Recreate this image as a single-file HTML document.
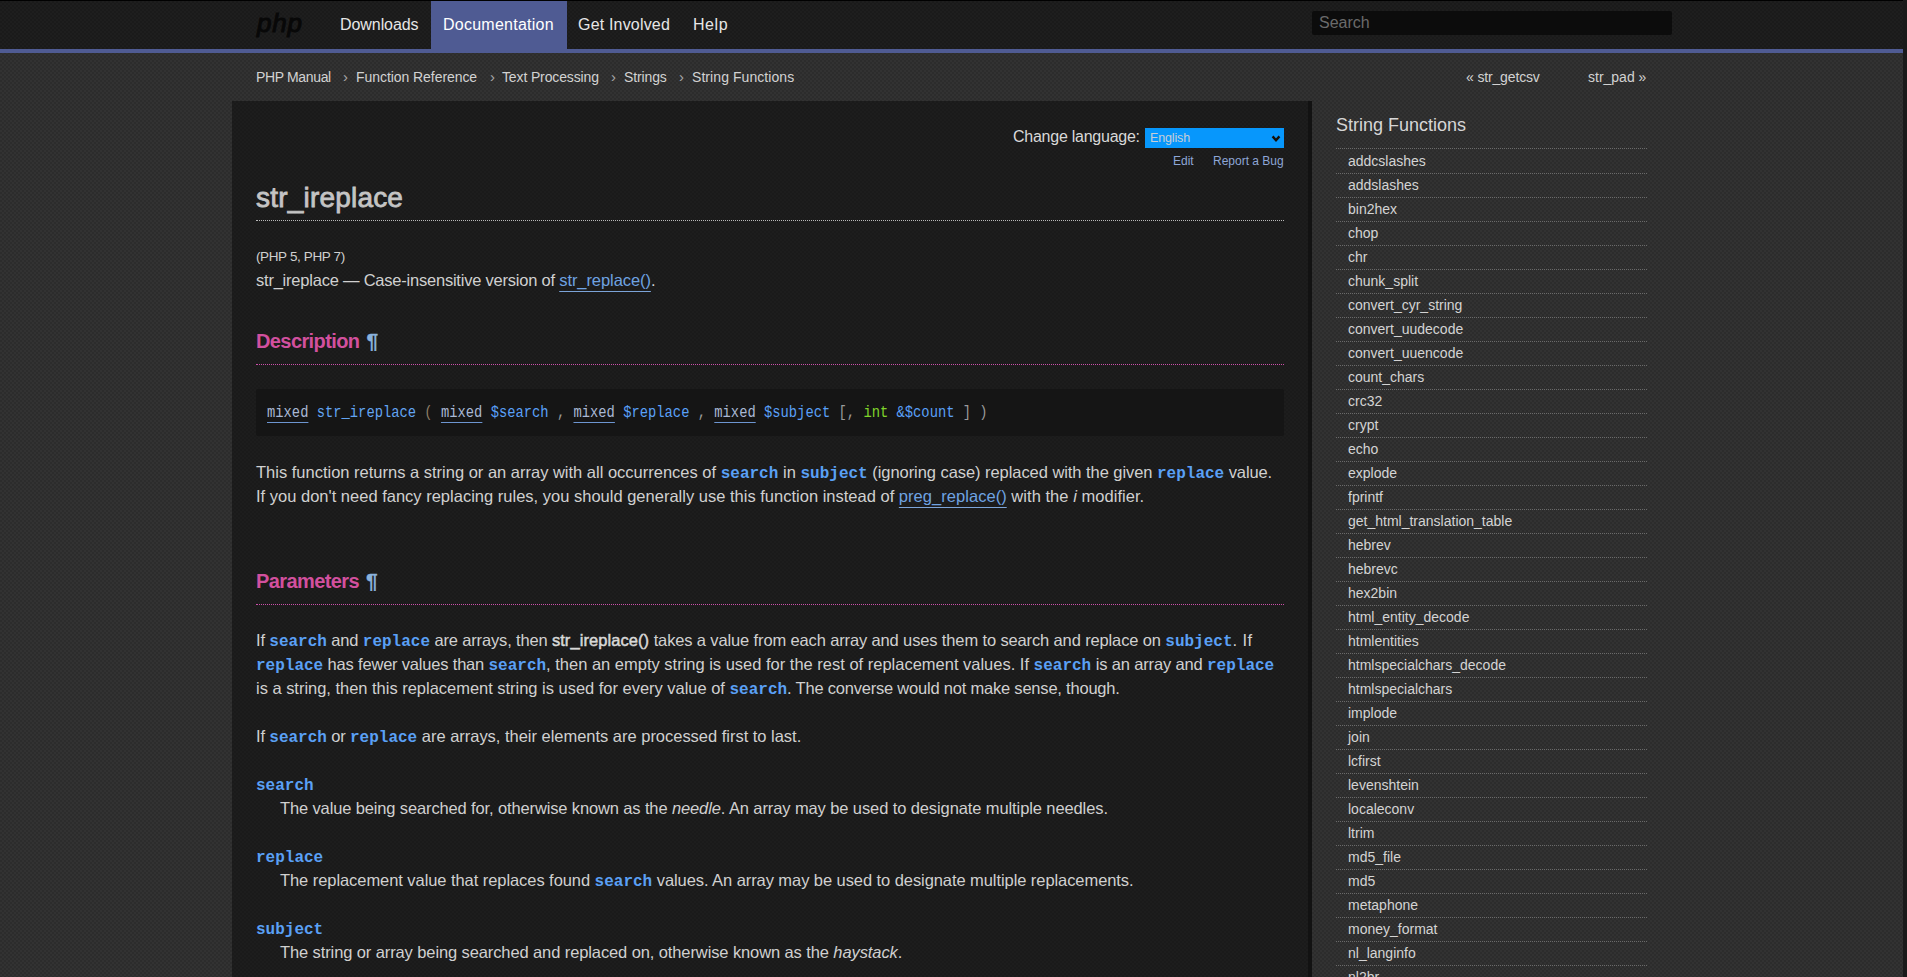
<!DOCTYPE html>
<html><head><meta charset="utf-8">
<style>
*{margin:0;padding:0;box-sizing:border-box}
html,body{width:1907px;height:977px;overflow:hidden}
body{font-family:"Liberation Sans",sans-serif;background:repeating-conic-gradient(#323232 0 25%,#2c2c2c 0 50%) 0 0/4px 4px;color:#cfcfcf;position:relative}
.abs{position:absolute;white-space:nowrap}
#topline{left:0;top:0;width:1907px;height:1px;background:#000}
#nav{left:0;top:1px;width:1903px;height:48px;background:repeating-conic-gradient(#1e1e1e 0 25%,#1a1a1a 0 50%) 0 0/4px 4px}
#navline{left:0;top:49px;width:1903px;height:4px;background:#4f5b93}
#scroll{left:1903px;top:0;width:4px;height:977px;background:#1a1a1a}
#logo{left:257px;top:8px;font:italic 26px/30px "Liberation Sans",sans-serif;color:#080808;-webkit-text-stroke:1px #080808;letter-spacing:0.8px}
.nav{top:1px;height:48px;line-height:48px;font-size:16px;color:#e6e6e6}
#docbox{left:431px;top:1px;width:136px;height:48px;background:#4f5b93}
#search{left:1312px;top:11px;width:360px;height:24px;background:#0c0c0c;border-radius:2px;color:#6a6a6a;font-size:16px;line-height:24px;padding-left:7px}
.bc{top:67px;font-size:14px;line-height:20px;color:#d2d2d2}
.sep{top:67px;font-size:15px;line-height:20px;color:#a8a8a8}
#content{left:232px;top:101px;width:1076px;height:876px;background:repeating-conic-gradient(#1d1d1d 0 25%,#1a1a1a 0 50%) 0 0/4px 4px}
#cborder{left:1308px;top:101px;width:4px;height:876px;background:#121212}
.p{font-size:16.5px;line-height:24px;left:256px;color:#d0d0d0}
.c{font-family:"Liberation Mono",monospace;font-weight:bold;color:#5aa0f5;font-size:16px}
a{color:#6fa3e2;text-decoration:underline;text-decoration-color:#7ca4d8;text-underline-offset:5px;text-decoration-thickness:1px}
.h2{left:256px;font-size:20px;line-height:24px;font-weight:bold;color:#d2509e;letter-spacing:-0.6px}
.pil{color:#8ab2dc;letter-spacing:0;font-size:21px;margin-left:2px;-webkit-text-stroke:0.3px #8ab2dc}
.dots{height:1px;border-top:1px dotted #b8b8b8}
.mdots{height:1px;border-top:1px dotted #cc4ea8}
#syn{left:256px;top:389px;width:1028px;height:47px;background:#151515;border-radius:2px}
#syntxt{left:267px;top:403px;font-family:"Liberation Mono",monospace;font-size:16.5px;line-height:20px;color:#9a9a9a;transform:scaleX(0.8364);transform-origin:0 0}
.ty{color:#a9b8d4;text-decoration:underline;text-decoration-color:#6d95d0;text-underline-offset:5px;text-decoration-thickness:1px}
.fn{color:#62a4f2}
.var{color:#5aa0f8}
.grn{color:#80d42a}
.pun{color:#8a7d66}
.side{left:1347px;font-size:14px;line-height:20px;color:#d4d4d4}
.sline{left:1336px;width:311px;height:1px;border-top:1px dotted #6a6a6a}

.p b{font-weight:normal;-webkit-text-stroke:0.5px #d8d8d8;color:#d8d8d8}

</style></head><body>
<div class="abs" id="topline"></div>
<div class="abs" id="nav"></div>
<div class="abs" id="navline"></div>
<div class="abs" id="scroll"></div>
<div class="abs" id="logo">php</div>
<div class="abs" id="docbox"></div>
<div class="abs nav" style="left:340px;letter-spacing:-0.07px">Downloads</div>
<div class="abs nav" style="left:443px;color:#fff;letter-spacing:0.25px">Documentation</div>
<div class="abs nav" style="left:578px;letter-spacing:0.18px">Get Involved</div>
<div class="abs nav" style="left:693px;letter-spacing:0.55px">Help</div>
<div class="abs" id="search">Search</div>

<div class="abs bc" style="left:256px;letter-spacing:-0.35px">PHP Manual</div>
<div class="abs sep" style="left:343px">›</div>
<div class="abs bc" style="left:356px;letter-spacing:-0.06px">Function Reference</div>
<div class="abs sep" style="left:490px">›</div>
<div class="abs bc" style="left:502px;letter-spacing:-0.13px">Text Processing</div>
<div class="abs sep" style="left:611px">›</div>
<div class="abs bc" style="left:624px;letter-spacing:-0.13px">Strings</div>
<div class="abs sep" style="left:679px">›</div>
<div class="abs bc" style="left:692px;letter-spacing:0.07px">String Functions</div>
<div class="abs bc" style="left:1466px;letter-spacing:-0.15px">« str_getcsv</div>
<div class="abs bc" style="left:1588px">str_pad »</div>

<div class="abs" id="content"></div>
<div class="abs" id="cborder"></div>

<div class="abs" style="left:1013px;top:127px;font-size:16px;line-height:20px;color:#d8d8d8;letter-spacing:-0.25px">Change language:</div>
<div class="abs" style="left:1145px;top:128px;width:139px;height:20px;background:#0797fc;color:#c8ced6;font-size:12.5px;letter-spacing:-0.15px;line-height:20px;padding-left:5px">English<svg style="position:absolute;left:126px;top:7px" width="10" height="8" viewBox="0 0 10 8"><path d="M1.6 1.4 L5 5.2 L8.4 1.4" stroke="#161008" stroke-width="2.4" fill="none"/></svg></div>
<div class="abs" style="left:1173px;top:153px;font-size:12px;line-height:16px;color:#8ea6d6">Edit</div>
<div class="abs" style="left:1213px;top:153px;font-size:12px;line-height:16px;color:#8ea6d6">Report a Bug</div>

<div class="abs" style="left:256px;top:182px;font-size:28px;line-height:32px;color:#c4c4c4;-webkit-text-stroke:0.8px #c4c4c4;letter-spacing:0.2px">str_ireplace</div>
<div class="abs dots" style="left:256px;top:220px;width:1028px"></div>


<div class="abs h2" style="top:329px">Description <span class="pil">¶</span></div>
<div class="abs mdots" style="left:256px;top:364px;width:1028px"></div>

<div class="abs" id="syn"></div>
<div class="abs" id="syntxt"><span class="ty">mixed</span> <span class="fn">str_ireplace</span> <span class="pun">(</span> <span class="ty">mixed</span> <span class="var">$search</span> , <span class="ty">mixed</span> <span class="var">$replace</span> , <span class="ty">mixed</span> <span class="var">$subject</span> [, <span class="grn">int</span> <span class="var">&amp;$count</span> ] )</div>


<div class="abs h2" style="top:569px">Parameters <span class="pil">¶</span></div>
<div class="abs mdots" style="left:256px;top:604px;width:1028px"></div>




<div class="abs" style="left:1336px;top:113px;font-size:18px;line-height:24px;color:#d6d6d6">String Functions</div>
<div class="abs sline" style="top:148px"></div>
<div class="abs side" style="left:1348px;top:151px">addcslashes</div><div class="abs sline" style="top:173px"></div>
<div class="abs side" style="left:1348px;top:175px">addslashes</div><div class="abs sline" style="top:197px"></div>
<div class="abs side" style="left:1348px;top:199px">bin2hex</div><div class="abs sline" style="top:221px"></div>
<div class="abs side" style="left:1348px;top:223px">chop</div><div class="abs sline" style="top:245px"></div>
<div class="abs side" style="left:1348px;top:247px">chr</div><div class="abs sline" style="top:269px"></div>
<div class="abs side" style="left:1348px;top:271px">chunk_split</div><div class="abs sline" style="top:293px"></div>
<div class="abs side" style="left:1348px;top:295px">convert_cyr_string</div><div class="abs sline" style="top:317px"></div>
<div class="abs side" style="left:1348px;top:319px">convert_uudecode</div><div class="abs sline" style="top:341px"></div>
<div class="abs side" style="left:1348px;top:343px">convert_uuencode</div><div class="abs sline" style="top:365px"></div>
<div class="abs side" style="left:1348px;top:367px">count_chars</div><div class="abs sline" style="top:389px"></div>
<div class="abs side" style="left:1348px;top:391px">crc32</div><div class="abs sline" style="top:413px"></div>
<div class="abs side" style="left:1348px;top:415px">crypt</div><div class="abs sline" style="top:437px"></div>
<div class="abs side" style="left:1348px;top:439px">echo</div><div class="abs sline" style="top:461px"></div>
<div class="abs side" style="left:1348px;top:463px">explode</div><div class="abs sline" style="top:485px"></div>
<div class="abs side" style="left:1348px;top:487px">fprintf</div><div class="abs sline" style="top:509px"></div>
<div class="abs side" style="left:1348px;top:511px">get_html_translation_table</div><div class="abs sline" style="top:533px"></div>
<div class="abs side" style="left:1348px;top:535px">hebrev</div><div class="abs sline" style="top:557px"></div>
<div class="abs side" style="left:1348px;top:559px">hebrevc</div><div class="abs sline" style="top:581px"></div>
<div class="abs side" style="left:1348px;top:583px">hex2bin</div><div class="abs sline" style="top:605px"></div>
<div class="abs side" style="left:1348px;top:607px">html_entity_decode</div><div class="abs sline" style="top:629px"></div>
<div class="abs side" style="left:1348px;top:631px">htmlentities</div><div class="abs sline" style="top:653px"></div>
<div class="abs side" style="left:1348px;top:655px">htmlspecialchars_decode</div><div class="abs sline" style="top:677px"></div>
<div class="abs side" style="left:1348px;top:679px">htmlspecialchars</div><div class="abs sline" style="top:701px"></div>
<div class="abs side" style="left:1348px;top:703px">implode</div><div class="abs sline" style="top:725px"></div>
<div class="abs side" style="left:1348px;top:727px">join</div><div class="abs sline" style="top:749px"></div>
<div class="abs side" style="left:1348px;top:751px">lcfirst</div><div class="abs sline" style="top:773px"></div>
<div class="abs side" style="left:1348px;top:775px">levenshtein</div><div class="abs sline" style="top:797px"></div>
<div class="abs side" style="left:1348px;top:799px">localeconv</div><div class="abs sline" style="top:821px"></div>
<div class="abs side" style="left:1348px;top:823px">ltrim</div><div class="abs sline" style="top:845px"></div>
<div class="abs side" style="left:1348px;top:847px">md5_file</div><div class="abs sline" style="top:869px"></div>
<div class="abs side" style="left:1348px;top:871px">md5</div><div class="abs sline" style="top:893px"></div>
<div class="abs side" style="left:1348px;top:895px">metaphone</div><div class="abs sline" style="top:917px"></div>
<div class="abs side" style="left:1348px;top:919px">money_format</div><div class="abs sline" style="top:941px"></div>
<div class="abs side" style="left:1348px;top:943px">nl_langinfo</div><div class="abs sline" style="top:965px"></div>
<div class="abs side" style="left:1348px;top:967px">nl2br</div><div class="abs sline" style="top:989px"></div>

<div class="abs p" style="top:245px;left:256px;font-size:13.5px"><span style="letter-spacing:-0.375px">(PHP 5, PHP 7)</span></div>
<div class="abs p" style="top:268px;left:256px;"><span style="letter-spacing:-0.221px">str_ireplace — Case-insensitive version of </span><a style="letter-spacing:-0.073px">str_replace()</a><span style="letter-spacing:-0.073px">.</span></div>
<div class="abs p" style="top:460px;left:256px;"><span style="letter-spacing:-0.004px">This function returns a string or an array with all occurrences of </span><span class="c">search</span><span style="letter-spacing:0.044px"> in </span><span class="c">subject</span><span style="letter-spacing:-0.058px"> (ignoring case) replaced with the given </span><span class="c">replace</span><span style="letter-spacing:-0.106px"> value.</span></div>
<div class="abs p" style="top:484px;left:256px;"><span style="letter-spacing:0.004px">If you don&#x27;t need fancy replacing rules, you should generally use this function instead of </span><a style="letter-spacing:0.040px">preg_replace()</a><span style="letter-spacing:0.040px"> with the </span><i style="letter-spacing:0.040px">i</i><span style="letter-spacing:0.040px"> modifier.</span></div>
<div class="abs p" style="top:628px;left:256px;"><span style="letter-spacing:-0.155px">If </span><span class="c">search</span><span style="letter-spacing:-0.163px"> and </span><span class="c">replace</span><span style="letter-spacing:-0.159px"> are arrays, then </span><b style="letter-spacing:0.073px">str_ireplace()</b><span style="letter-spacing:-0.135px"> takes a value from each array and uses them to search and replace on </span><span class="c">subject</span><span style="letter-spacing:0.434px">. If</span></div>
<div class="abs p" style="top:652px;left:256px;"><span class="c">replace</span><span style="letter-spacing:-0.192px"> has fewer values than </span><span class="c">search</span><span style="letter-spacing:-0.006px">, then an empty string is used for the rest of replacement values. If </span><span class="c">search</span><span style="letter-spacing:-0.148px"> is an array and </span><span class="c">replace</span></div>
<div class="abs p" style="top:676px;left:256px;"><span style="letter-spacing:-0.023px">is a string, then this replacement string is used for every value of </span><span class="c">search</span><span style="letter-spacing:-0.210px">. The converse would not make sense, though.</span></div>
<div class="abs p" style="top:724px;left:256px;"><span style="letter-spacing:-0.155px">If </span><span class="c">search</span><span style="letter-spacing:-0.188px"> or </span><span class="c">replace</span><span style="letter-spacing:-0.021px"> are arrays, their elements are processed first to last.</span></div>
<div class="abs p" style="top:772px;left:256px;"><span class="c">search</span></div>
<div class="abs p" style="top:796px;left:280px;"><span style="letter-spacing:-0.134px">The value being searched for, otherwise known as the </span><i style="letter-spacing:-0.104px">needle</i><span style="letter-spacing:-0.104px">. An array may be used to designate multiple needles.</span></div>
<div class="abs p" style="top:844px;left:256px;"><span class="c">replace</span></div>
<div class="abs p" style="top:868px;left:280px;"><span style="letter-spacing:-0.066px">The replacement value that replaces found </span><span class="c">search</span><span style="letter-spacing:-0.073px"> values. An array may be used to designate multiple replacements.</span></div>
<div class="abs p" style="top:916px;left:256px;"><span class="c">subject</span></div>
<div class="abs p" style="top:940px;left:280px;"><span style="letter-spacing:-0.107px">The string or array being searched and replaced on, otherwise known as the </span><i style="letter-spacing:-0.091px">haystack</i><span style="letter-spacing:-0.091px">.</span></div>
</body></html>
